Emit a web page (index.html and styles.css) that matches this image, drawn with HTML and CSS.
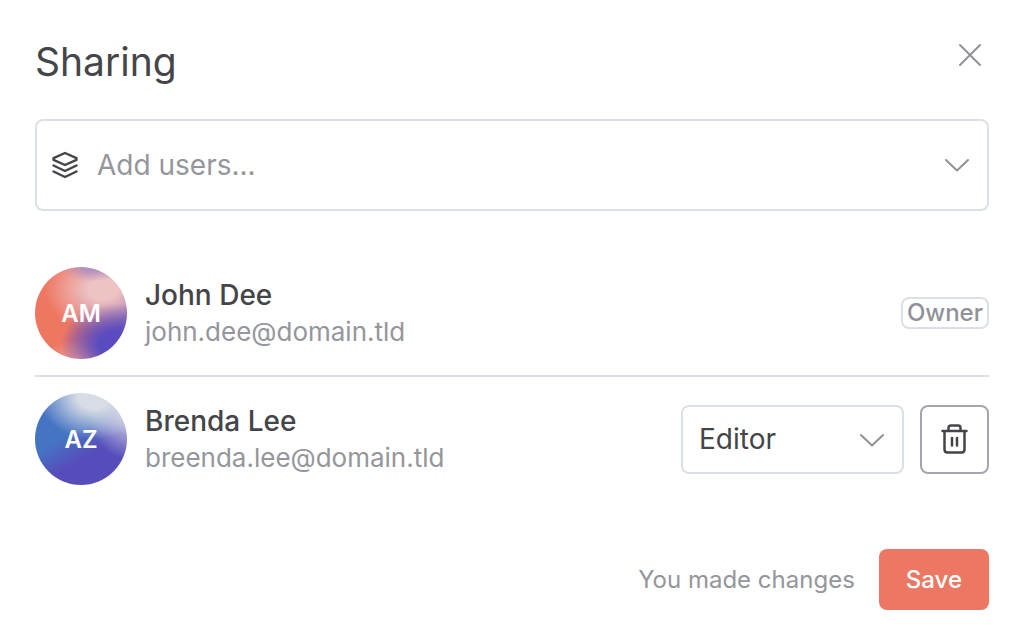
FILE: index.html
```html
<!DOCTYPE html>
<html lang="en">

<head>
    <meta charset="UTF-8">
    <meta name="viewport" content="width=device-width, initial-scale=1.0">
    <title>Sharing</title>
    <link rel="stylesheet" href="styles.css">
</head>

<body>
    <main class="modal">
        <header class="modal-header">
            <h1 class="modal-title">Sharing</h1>
            <button class="close-button" type="button" aria-label="Close">
                <svg width="24" height="24" viewBox="0 0 24 24" fill="none" stroke="currentColor" stroke-width="2" stroke-linecap="round">
                    <path d="M2 2l20 20M22 2L2 22" />
                </svg>
            </button>
        </header>

        <div class="user-search">
            <svg class="icon-layers" width="28" height="28" viewBox="0 0 28 28" fill="none" stroke="currentColor" stroke-width="2.4" stroke-linecap="round" stroke-linejoin="round">
                <path d="M14 2l11.500 5.200v1.600L14 14 2.500 8.800V7.200z" />
                <path d="M2.500 14.500L14 20l11.500-5.500" />
                <path d="M2.500 20.500L14 26l11.500-5.500" />
            </svg>
            <input class="user-input" type="text" placeholder="Add users..." aria-label="Add users">
            <svg class="icon-chevron" width="24" height="14" viewBox="0 0 24 14" fill="none" stroke="currentColor" stroke-width="2" stroke-linecap="round" stroke-linejoin="round">
                <path d="M1 2l11 10.500L23 2" />
            </svg>
        </div>

        <ul class="user-list">
            <li class="user-item">
                <div class="avatar avatar-coral">AM</div>
                <div class="user-info">
                    <div class="user-name">John Dee</div>
                    <div class="user-email">john.dee@domain.tld</div>
                </div>
                <span class="badge">Owner</span>
            </li>
            <li class="user-item">
                <div class="avatar avatar-blue">AZ</div>
                <div class="user-info">
                    <div class="user-name">Brenda Lee</div>
                    <div class="user-email">breenda.lee@domain.tld</div>
                </div>
                <div class="role-select">
                    <select class="role-control" aria-label="Role">
                        <option>Editor</option>
                    </select>
                    <svg class="icon-chevron role-chevron" width="24" height="14" viewBox="0 0 24 14" fill="none" stroke="currentColor" stroke-width="2" stroke-linecap="round" stroke-linejoin="round">
                        <path d="M1 2l11 10.500L23 2" />
                    </svg>
                </div>
                <button class="delete-button" type="button" aria-label="Remove user">
                    <svg width="28" height="32" viewBox="0 0 28 32" fill="none" stroke="currentColor" stroke-width="2.500" stroke-linecap="round" stroke-linejoin="round">
                        <path d="M1.500 8h24M7.500 7.500V5q0-2.500 2.500-2.500h7q2.500 0 2.500 2.500v2.500" />
                        <path d="M3.500 8.500V26.500q0 3 3 3h14q3 0 3-3V8.500" />
                        <path d="M11 15v7.500M16 15v7.500" />
                    </svg>
                </button>
            </li>
        </ul>

        <footer class="modal-footer">
            <span class="footer-text">You made changes</span>
            <button class="save-button" type="button">Save</button>
        </footer>
    </main>
</body>

</html>
```
FILE: styles.css
```css
* {
    margin: 0;
    padding: 0;
    box-sizing: border-box;
}

body {
    font-family: 'Inter', sans-serif;
    background-color: #fff;
    color: #444548;
}

button,
input,
select {
    font: inherit;
    color: inherit;
}

button {
    cursor: pointer;
}

.modal {
    padding: 36px 35px 32px;
}

/* header */
.modal-header {
    display: flex;
    justify-content: space-between;
    align-items: flex-start;
    margin-bottom: 31px;
}

.modal-title {
    font-size: 39px;
    font-weight: 400;
    line-height: 52px;
}

.close-button {
    display: flex;
    padding: 7px;
    border: none;
    background: none;
    color: #909298;
}

/* add users */
.user-search {
    display: flex;
    align-items: center;
    height: 92px;
    padding: 0 18px 0 14px;
    border: 2px solid #dbdfe7;
    border-radius: 8px;
    margin-bottom: 56px;
}

.user-input {
    flex: 1;
    min-width: 0;
    margin: 0 18px;
    border: none;
    outline: none;
    background: none;
    font-size: 28px;
}

.user-input::placeholder {
    color: #94969b;
    opacity: 1;
}

.icon-chevron {
    color: #909298;
}

/* users */
.user-list {
    list-style: none;
    margin-bottom: 64px;
}

.user-item {
    display: flex;
    align-items: center;
}

.user-item + .user-item {
    margin-top: 16px;
    padding-top: 16px;
    border-top: 2px solid #dbdfe7;
}

.avatar {
    display: flex;
    align-items: center;
    justify-content: center;
    flex-shrink: 0;
    width: 92px;
    height: 92px;
    border-radius: 50%;
    color: #fff;
    font-size: 24px;
    font-weight: 600;
}

.avatar-coral {
    background:
        radial-gradient(ellipse 34% 16% at 62% 0%, #a48ac4 0, rgba(164, 138, 196, 0) 100%),
        radial-gradient(ellipse 60% 44% at 88% 84%, #5a4bc0 30%, rgba(90, 75, 192, 0) 100%),
        radial-gradient(ellipse 64% 46% at 74% 24%, #eec3c4 25%, rgba(238, 195, 196, 0) 100%),
        radial-gradient(ellipse 40% 22% at 50% 100%, #efa09a 0, rgba(239, 160, 154, 0) 100%),
        linear-gradient(100deg, #ee7762 38%, #8a62b0 92%);
}

.avatar-blue {
    background:
        radial-gradient(ellipse 60% 46% at 64% 4%, #d7dce5 30%, rgba(205, 208, 226, 0) 100%),
        radial-gradient(ellipse 46% 50% at 104% 22%, #c6c6e0 20%, rgba(187, 184, 219, 0) 100%),
        linear-gradient(150deg, #4574c3 42%, #564dbb 64%);
}

.user-info {
    flex: 1;
    min-width: 0;
    padding-left: 18px;
}

.user-name {
    font-size: 28px;
    font-weight: 500;
    line-height: 38px;
}

.user-email {
    font-size: 26px;
    line-height: 36px;
    color: #94969b;
}

.badge {
    padding: 0 4px;
    border: 2px solid #dbdfe7;
    border-radius: 8px;
    color: #909298;
    font-size: 24px;
    font-weight: 500;
    line-height: 28px;
}

.role-select {
    position: relative;
    width: 223px;
    margin-right: 16px;
}

.role-control {
    display: block;
    appearance: none;
    width: 100%;
    height: 69px;
    padding: 0 50px 0 16px;
    border: 2px solid #dbdfe7;
    border-radius: 8px;
    background: none;
    font-size: 28px;
}

.role-chevron {
    position: absolute;
    top: 28px;
    right: 20px;
    pointer-events: none;
}

.delete-button {
    display: flex;
    align-items: center;
    justify-content: center;
    width: 69px;
    height: 69px;
    border: 2px solid #a3a6b2;
    border-radius: 8px;
    background: none;
}

/* footer */
.modal-footer {
    display: flex;
    justify-content: flex-end;
    align-items: center;
    gap: 24px;
}

.footer-text {
    color: #94969b;
    font-size: 24px;
}

.save-button {
    height: 61px;
    padding: 0 27px;
    border: none;
    border-radius: 8px;
    background-color: #ec7762;
    color: #fff;
    font-size: 24px;
    font-weight: 500;
}
```
